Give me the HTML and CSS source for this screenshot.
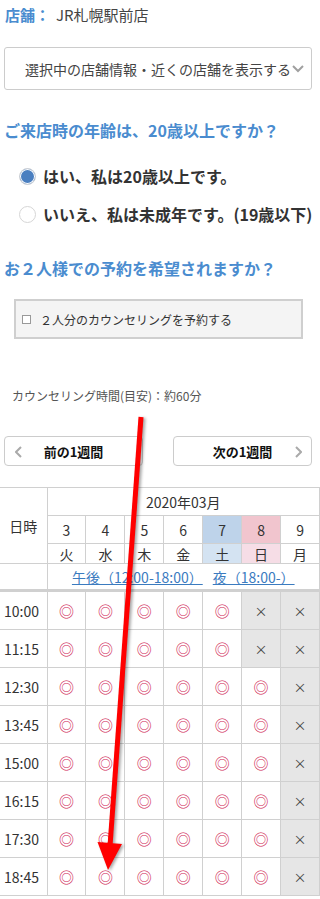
FILE: index.html
```html
<!DOCTYPE html>
<html lang="ja">
<head>
    <meta charset="UTF-8">
    <meta name="viewport" content="width=device-width, initial-scale=1.0">
    <title>カウンセリング予約</title>
    <link rel="stylesheet" href="styles.css">
</head>
<body>
    <div class="page">
        <p class="shop"><span class="shop-label">店舗：</span>JR札幌駅前店</p>

        <div class="store-select">
            <span>選択中の店舗情報・近くの店舗を表示する</span>
            <svg class="chev-down" width="12" height="8" viewBox="0 0 12 8"><polyline points="1,1 6,6 11,1" fill="none" stroke="#a0a0a0" stroke-width="2"/></svg>
        </div>

        <h2 class="question">ご来店時の年齢は、20歳以上ですか？</h2>
        <ul class="choices">
            <li><span class="radio on"></span>はい、私は20歳以上です。</li>
            <li><span class="radio"></span>いいえ、私は未成年です。(19歳以下)</li>
        </ul>

        <h2 class="question q2">お２人様での予約を希望されますか？</h2>
        <label class="pair"><span class="check"></span>２人分のカウンセリングを予約する</label>

        <p class="duration">カウンセリング時間(目安)：約60分</p>

        <div class="week-nav">
            <button class="week-btn">
                <svg class="chev-left" width="7" height="12" viewBox="0 0 7 12"><polyline points="6,1 1,6 6,11" fill="none" stroke="#aaa" stroke-width="2"/></svg>
                前の1週間
            </button>
            <button class="week-btn">
                次の1週間
                <svg class="chev-right" width="7" height="12" viewBox="0 0 7 12"><polyline points="1,1 6,6 1,11" fill="none" stroke="#aaa" stroke-width="2"/></svg>
            </button>
        </div>

        <table class="calendar">
            <colgroup>
                <col class="col-time">
                <col><col><col><col><col><col><col>
            </colgroup>
            <tr class="row-month">
                <th rowspan="3">日時</th>
                <th colspan="7">2020年03月</th>
            </tr>
            <tr class="row-date">
                <td>3</td><td>4</td><td>5</td><td>6</td><td class="sat">7</td><td class="sun">8</td><td>9</td>
            </tr>
            <tr class="row-wday">
                <td>火</td><td>水</td><td>木</td><td>金</td><td class="sat-l">土</td><td class="sun-l">日</td><td>月</td>
            </tr>
            <tr class="row-links">
                <td></td>
                <td colspan="7"><a href="#">午後（12:00-18:00）</a><a href="#">夜（18:00-）</a></td>
            </tr>
            <tr>
                <td class="time">10:00</td>
                <td class="ok">◎</td><td class="ok">◎</td><td class="ok">◎</td><td class="ok">◎</td><td class="ok">◎</td><td class="ng">×</td><td class="ng">×</td>
            </tr>
            <tr>
                <td class="time">11:15</td>
                <td class="ok">◎</td><td class="ok">◎</td><td class="ok">◎</td><td class="ok">◎</td><td class="ok">◎</td><td class="ng">×</td><td class="ng">×</td>
            </tr>
            <tr>
                <td class="time">12:30</td>
                <td class="ok">◎</td><td class="ok">◎</td><td class="ok">◎</td><td class="ok">◎</td><td class="ok">◎</td><td class="ok">◎</td><td class="ng">×</td>
            </tr>
            <tr>
                <td class="time">13:45</td>
                <td class="ok">◎</td><td class="ok">◎</td><td class="ok">◎</td><td class="ok">◎</td><td class="ok">◎</td><td class="ok">◎</td><td class="ng">×</td>
            </tr>
            <tr>
                <td class="time">15:00</td>
                <td class="ok">◎</td><td class="ok">◎</td><td class="ok">◎</td><td class="ok">◎</td><td class="ok">◎</td><td class="ok">◎</td><td class="ng">×</td>
            </tr>
            <tr>
                <td class="time">16:15</td>
                <td class="ok">◎</td><td class="ok">◎</td><td class="ok">◎</td><td class="ok">◎</td><td class="ok">◎</td><td class="ok">◎</td><td class="ng">×</td>
            </tr>
            <tr>
                <td class="time">17:30</td>
                <td class="ok">◎</td><td class="ok">◎</td><td class="ok">◎</td><td class="ok">◎</td><td class="ok">◎</td><td class="ok">◎</td><td class="ng">×</td>
            </tr>
            <tr>
                <td class="time">18:45</td>
                <td class="ok">◎</td><td class="ok">◎</td><td class="ok">◎</td><td class="ok">◎</td><td class="ok">◎</td><td class="ok">◎</td><td class="ng">×</td>
            </tr>
        </table>
    </div>

    <!-- annotation arrow drawn over the page -->
    <svg class="annotation" width="320" height="899" viewBox="0 0 320 899">
        <line x1="141" y1="417" x2="110" y2="846" stroke="#ff0000" stroke-width="5"/>
        <polygon points="97.5,842 122,844 108,870" fill="#ff0000"/>
    </svg>
</body>
</html>
```

FILE: styles.css
```css
body {
    margin: 0;
    font-family: "Noto Sans CJK JP", "Noto Sans", sans-serif;
    color: #333;
    background: #fff;
    overflow-x: hidden;
}

.page {
    position: relative;
    width: 320px;
    overflow: hidden;
}

.shop {
    margin: 0;
    padding: 4px 0 0 5px;
    font-size: 15px;
    line-height: 22px;
    color: #444;
}

.shop-label {
    color: #4a8ccf;
    font-weight: bold;
    margin-right: 6px;
}

.store-select {
    margin: 21px 0 0 4px;
    width: 308px;
    height: 43px;
    box-sizing: border-box;
    border: 1px solid #ccc;
    border-radius: 3px;
    display: flex;
    align-items: center;
    padding-left: 20px;
    font-size: 14px;
    color: #444;
    white-space: nowrap;
}

.chev-down {
    margin-left: 1px;
    flex: none;
}

.question {
    margin: 28px 0 0;
    padding-left: 4px;
    font-size: 16px;
    line-height: 24px;
    font-weight: bold;
    color: #4a8ccf;
    white-space: nowrap;
}

.question.q2 {
    margin-top: 30px;
}

.choices {
    list-style: none;
    margin: 22px 0 0;
    padding: 0 0 0 19px;
    white-space: nowrap;
}

.choices li {
    display: flex;
    align-items: center;
    height: 24px;
    font-size: 16px;
    font-weight: bold;
    color: #333;
}

.choices li + li {
    margin-top: 14px;
}

.radio {
    width: 15px;
    height: 15px;
    border: 1px solid #d6d6d6;
    border-radius: 50%;
    background: #fff;
    margin-right: 7px;
    flex: none;
}

.radio.on {
    background: #4a7fc0;
    box-shadow: inset 0 0 0 1px #fff;
}

.pair {
    margin: 19px 0 0 14px;
    width: 289px;
    height: 40px;
    box-sizing: border-box;
    border: 2px solid #cfcfcf;
    background: #f4f4f4;
    display: flex;
    align-items: center;
    padding-left: 6px;
    font-size: 12px;
    color: #333;
}

.check {
    width: 7px;
    height: 7px;
    border: 1px solid #999;
    background: #fff;
    margin-right: 9px;
}

.duration {
    margin: 48px 0 0;
    padding-left: 12px;
    font-size: 12px;
    line-height: 18px;
    color: #555;
}

.week-nav {
    margin-top: 31px;
    padding: 0 8px 0 4px;
    display: flex;
    justify-content: space-between;
}

.week-btn {
    position: relative;
    width: 139px;
    height: 30px;
    border: 1px solid #ccc;
    border-radius: 4px;
    background: #fff;
    font-family: inherit;
    font-size: 13px;
    font-weight: bold;
    color: #111;
    padding: 0;
}

.chev-left,
.chev-right {
    position: absolute;
    top: 9px;
}

.chev-left {
    left: 10px;
}

.chev-right {
    right: 9px;
}

.calendar {
    margin-top: 21px;
    width: 320px;
    table-layout: fixed;
    border-collapse: collapse;
    font-size: 13px;
    color: #333;
}

.col-time {
    width: 47px;
}

.calendar th,
.calendar td {
    border: 1px solid #d0d0d0;
    padding: 0;
    text-align: center;
    font-weight: normal;
}

.calendar tr > :first-child {
    border-left: none;
}

.row-month {
    height: 28px;
    font-size: 14px;
}

.row-date {
    height: 28px;
    font-size: 14px;
}

.row-wday {
    height: 20px;
    line-height: 18px;
    font-size: 14px;
}

.row-links {
    height: 27px;
}

.row-links td {
    border-bottom: 3px solid #d0d0d0;
}

.row-links a {
    color: #3b7bbf;
    font-size: 14px;
    margin: 0 5px;
}

.sat { background: #bed3ea; }
.sun { background: #f1c5ce; }
.sat-l { background: #d4e3f2; }
.sun-l { background: #f6dde6; }

.calendar .time {
    height: 37px;
    text-align: left;
    padding-left: 4px;
    font-size: 14px;
}

.ok {
    color: #cf2453;
    font-size: 15px;
    font-weight: bold;
}

.ng {
    background: #e6e6e6;
    color: #444;
    font-size: 13px;
}

.annotation {
    position: absolute;
    top: 0;
    left: 0;
    pointer-events: none;
    filter: drop-shadow(2px 1px 1.5px rgba(0, 0, 0, 0.35));
}
```
